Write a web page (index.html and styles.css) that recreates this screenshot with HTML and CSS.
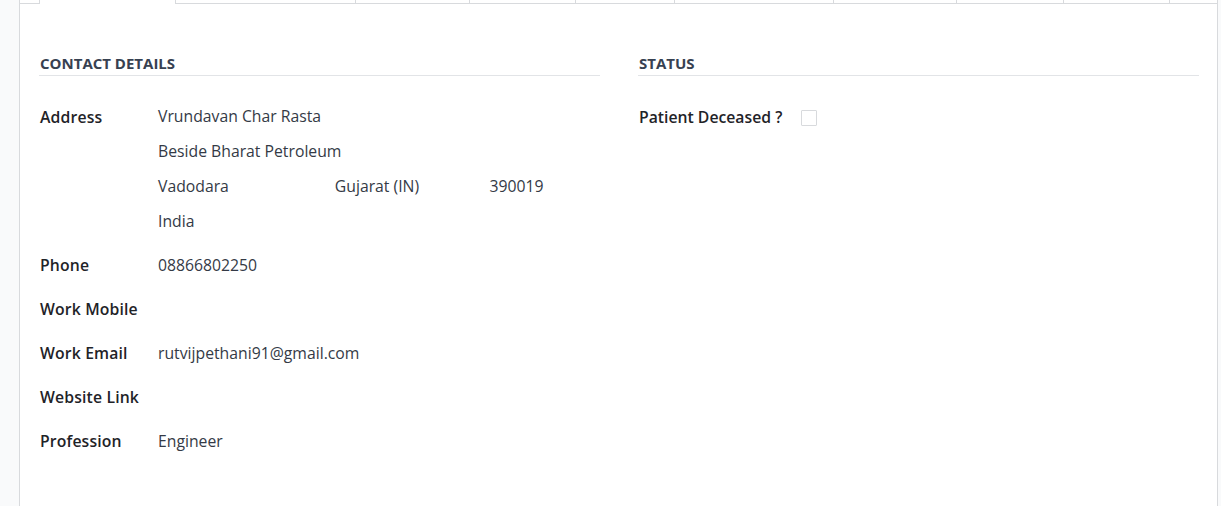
FILE: index.html
```html
<!DOCTYPE html>
<html>
<head>
<meta charset="utf-8">
<link rel="stylesheet" href="styles.css">
</head>
<body>
<div class="page">
  <div class="sheet">
    <div class="tabs">
      <div class="tab active"></div>
      <div class="tab t2"></div>
      <div class="tab t3"></div>
      <div class="tab t4"></div>
      <div class="tab t5"></div>
      <div class="tab t6"></div>
      <div class="tab t7"></div>
      <div class="tab t8"></div>
      <div class="tab t9"></div>
    </div>
    <div class="pane">
      <div class="group">
        <div class="group-title">Contact Details</div>
        <div class="fields left">
          <div class="label">Address</div>
          <div class="value address">
            <div>Vrundavan Char Rasta</div>
            <div>Beside Bharat Petroleum</div>
            <div class="addr-row"><span class="city">Vadodara</span><span class="state">Gujarat (IN)</span><span class="zip">390019</span></div>
            <div>India</div>
          </div>
          <div class="label">Phone</div>
          <div class="value">08866802250</div>
          <div class="label">Work Mobile</div>
          <div class="value"></div>
          <div class="label">Work Email</div>
          <div class="value">rutvijpethani91@gmail.com</div>
          <div class="label">Website Link</div>
          <div class="value"></div>
          <div class="label">Profession</div>
          <div class="value">Engineer</div>
        </div>
      </div>
      <div class="group">
        <div class="group-title">Status</div>
        <div class="fields right">
          <div class="label">Patient Deceased ?</div>
          <div class="value"><span class="checkbox"></span></div>
        </div>
      </div>
    </div>
  </div>
</div>
</body>
</html>
```
FILE: styles.css
```css
html, body {
  margin: 0;
  padding: 0;
}
body {
  background: #f9fafb;
  font-family: "Open Sans", "Liberation Sans", sans-serif;
  font-size: 15.75px;
  color: #374151;
}
.page {
  padding-left: 19px;
  padding-right: 3px;
  height: 506px;
  overflow: hidden;
}
.sheet {
  background: #fff;
  border-left: 1px solid #d8dadd;
  border-right: 1px solid #d8dadd;
  height: 506px;
}
.tabs {
  display: flex;
  height: 3px;
  border-bottom: 1px solid #d8dadd;
  padding-left: 19px;
}
.tab {
  height: 3px;
  border-right: 1px solid #d8dadd;
  box-sizing: border-box;
}
.tab.active {
  width: 137px;
  height: 4px;
  border-left: 1px solid #d8dadd;
  background: #fff;
  margin-bottom: -1px;
}
.t2 { width: 180px; }
.t3 { width: 114px; }
.t4 { width: 106px; }
.t5 { width: 99px; }
.t6 { width: 159px; }
.t7 { width: 123px; }
.t8 { width: 107px; }
.t9 { width: 106px; }
.pane {
  display: grid;
  grid-template-columns: 1fr 1fr;
  column-gap: 38px;
  padding: 51px 18px 0 19px;
}
.group-title {
  font-weight: 700;
  text-transform: uppercase;
  color: #374151;
  font-size: 15px;
  line-height: 17px;
  padding: 0 0 3px 1px;
  border-bottom: 1px solid #e2e4e7;
}
.fields {
  display: grid;
  row-gap: 8px;
  margin-top: 23px;
  align-items: start;
}
.fields.left {
  grid-template-columns: 119px 1fr;
}
.fields.right {
  grid-template-columns: 163px 1fr;
}
.label {
  font-weight: 600;
  color: #1f2328;
  line-height: 36px;
  padding-left: 1px;
  white-space: nowrap;
  letter-spacing: 0.15px;
}
.fields.right .label {
  letter-spacing: 0;
}
.value {
  line-height: 36px;
  min-height: 36px;
  color: #343a46;
}
.address {
  line-height: 35px;
}
.addr-row {
  display: flex;
}
.city { width: 40%; }
.state { width: 35%; }
.zip { width: 25%; }
.checkbox {
  display: inline-block;
  width: 16px;
  height: 16px;
  box-sizing: border-box;
  border: 1px solid #d8dadd;
  border-radius: 1px;
  vertical-align: middle;
  margin-top: -2px;
}
```
